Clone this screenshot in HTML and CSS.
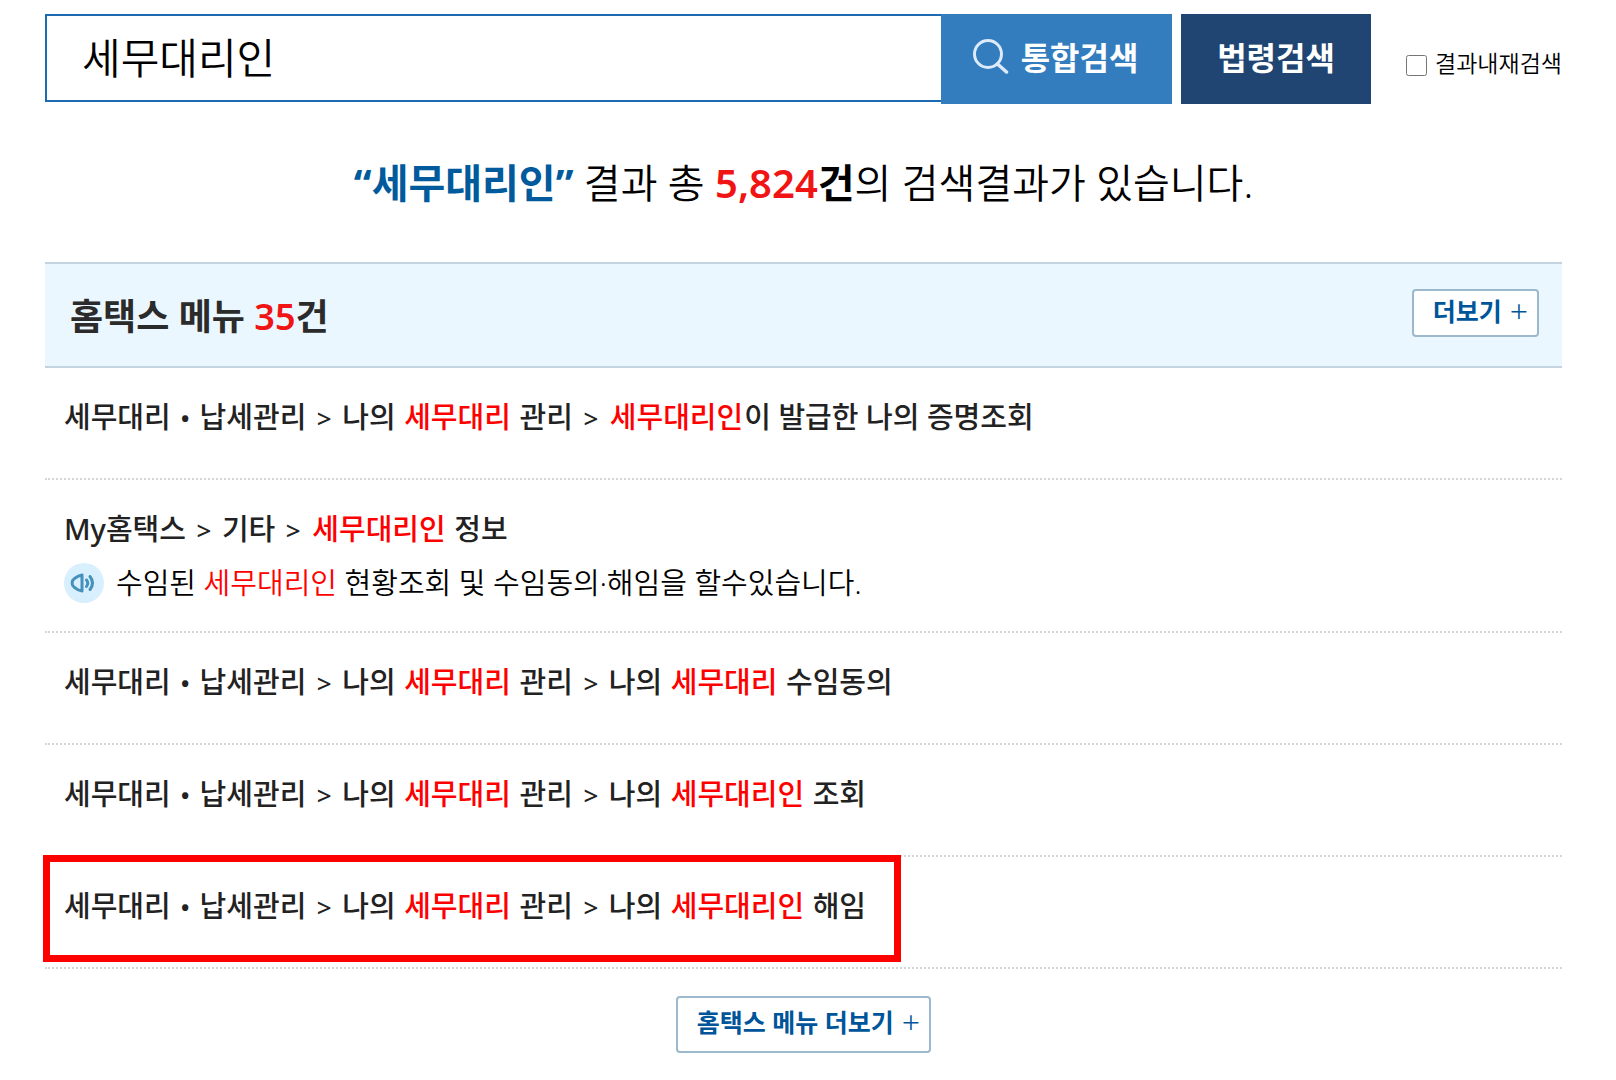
FILE: index.html
```html
<!DOCTYPE html>
<html lang="ko">
<head>
  <meta charset="UTF-8">
  <title>통합검색</title>
  <meta name="viewport" content="width=device-width, initial-scale=1">
  <link rel="stylesheet" href="styles.css">
</head>
<body>
  <div class="wrapper">
    <form class="search">
      <input class="search-input" type="text" value="세무대리인" aria-label="검색어">
      <button class="btn-search" type="submit">
        <svg width="36" height="36" viewBox="0 0 36 36" fill="none" stroke="#dceafa" stroke-width="3" stroke-linecap="round" aria-hidden="true">
          <circle cx="15" cy="16" r="13.500"/>
          <path d="M24.500 26L33.500 34" stroke-width="3.500"/>
        </svg>
        <span>통합검색</span>
      </button>
      <button class="btn-law" type="button">법령검색</button>
      <label class="again"><input type="checkbox"><span>결과내재검색</span></label>
    </form>

    <p class="summary"><strong class="keyword">“세무대리인”</strong> 결과 총 <strong><em>5,824</em>건</strong>의 검색결과가 있습니다.</p>

    <div class="group">
      <div class="group-head">
        <h2>홈택스 메뉴 <em>35</em>건</h2>
        <button class="btn-more" type="button">더보기 <span>+</span></button>
      </div>
      <ul class="list">
        <li><a href="#">세무대리 <i class="dot">•</i> 납세관리 <i>&gt;</i> 나의 <em>세무대리</em> 관리 <i>&gt;</i> <em>세무대리인</em>이 발급한 나의 증명조회</a></li>
        <li>
          <a href="#">My홈택스 <i>&gt;</i> 기타 <i>&gt;</i> <em>세무대리인</em> 정보</a>
          <p class="desc">
            <svg width="40" height="40" viewBox="0 0 40 40" fill="none" stroke="#4590bd" stroke-width="3" stroke-linecap="round" stroke-linejoin="round" aria-hidden="true">
              <circle cx="20" cy="20" r="20" fill="#d8effd" stroke="none"/>
              <path d="M18 12V28C14 27.500 12.500 26 10 24C7.500 22.500 7.500 17.500 10 16C12.500 14 14 12.500 18 12Z"/>
              <path d="M22.500 17Q25 20 22.500 23.500M26 13.500Q31 20 26 26.500"/>
            </svg>
            <span>수임된 <em>세무대리인</em> 현황조회 및 수임동의·해임을 할수있습니다.</span>
          </p>
        </li>
        <li><a href="#">세무대리 <i class="dot">•</i> 납세관리 <i>&gt;</i> 나의 <em>세무대리</em> 관리 <i>&gt;</i> 나의 <em>세무대리</em> 수임동의</a></li>
        <li><a href="#">세무대리 <i class="dot">•</i> 납세관리 <i>&gt;</i> 나의 <em>세무대리</em> 관리 <i>&gt;</i> 나의 <em>세무대리인</em> 조회</a></li>
        <li class="marked"><a href="#">세무대리 <i class="dot">•</i> 납세관리 <i>&gt;</i> 나의 <em>세무대리</em> 관리 <i>&gt;</i> 나의 <em>세무대리인</em> 해임</a></li>
      </ul>
      <button class="btn-more btn-all" type="button">홈택스 메뉴 더보기 <span>+</span></button>
    </div>
  </div>
</body>
</html>
```
FILE: styles.css
```css
*, *::before {
  box-sizing: border-box;
}
body, h2, p, ul {
  margin: 0;
  padding: 0;
}
body, button, input {
  font-family: "Noto Sans", "Noto Sans CJK KR", sans-serif;
}
body {
  background: #fff;
  color: #000;
}
em {
  font-style: normal;
  color: #f01414;
}
button {
  cursor: pointer;
}
.wrapper {
  padding: 14px 54px 24px 45px;
}

/* search bar */
.search {
  display: flex;
  align-items: flex-start;
}
.search-input {
  flex: 1;
  min-width: 0;
  height: 88px;
  padding: 0 35px 6px;
  border: 2px solid #1c6ab2;
  border-right: 0;
  font-size: 42px;
  font-weight: 350;
  outline: 0;
}
.btn-search, .btn-law {
  display: flex;
  align-items: center;
  justify-content: center;
  height: 90px;
  padding: 0 0 6px;
  border: 0;
  color: #fff;
  font-size: 32px;
  font-weight: 700;
}
.btn-search {
  gap: 12px;
  width: 231px;
  padding-right: 2px;
  background: #337dbe;
}
.btn-law {
  width: 190px;
  margin-left: 9px;
  background: #204573;
}
.again {
  display: flex;
  align-items: center;
  gap: 8px;
  margin-left: 35px;
  padding-top: 32px;
  font-size: 23px;
  font-weight: 350;
  line-height: 34px;
}
.again input {
  width: 21px;
  height: 21px;
  margin: 4px 0 0;
}

.summary {
  padding: 47px 0 48px;
  font-size: 40px;
  font-weight: 350;
  line-height: 63px;
  text-align: center;
}
.summary strong {
  font-weight: 700;
}
.summary strong em {
  font-weight: 600;
}
.summary .keyword {
  color: #005a9c;
}

/* result group */
.group {
  display: flex;
  flex-direction: column;
}
.group-head {
  display: flex;
  align-items: flex-start;
  justify-content: space-between;
  height: 106px;
  padding: 25px 23px 0 25px;
  background: #ebf7ff;
  border-top: 2px solid #c3d3df;
  border-bottom: 2px solid #c3d3df;
}
.group-head h2 {
  color: #2b2b2b;
  font-size: 36px;
  font-weight: 700;
  line-height: 56px;
}
.group-head h2 em {
  font-weight: 600;
}
.btn-more {
  display: flex;
  align-items: center;
  gap: 8px;
  height: 48px;
  padding: 0 9px 4px 19px;
  background: #fff;
  border: 2px solid #9bb8cc;
  border-radius: 4px;
  color: #00559a;
  font-size: 25px;
  font-weight: 700;
  line-height: 40px;
}
.btn-more span {
  font-size: 32px;
  font-weight: 300;
}
.btn-all {
  align-self: center;
  height: 57px;
  margin-top: 27px;
  padding-bottom: 6px;
}

.list {
  list-style: none;
}
.list li {
  padding: 28px 19px 40px;
  border-bottom: 2px dotted #d6d6d6;
}
.list a {
  color: #222;
  font-size: 29px;
  font-weight: 500;
  line-height: 42px;
  text-decoration: none;
  display: block;
}
.list i {
  margin: 0 3px;
  font-size: 26px;
  font-style: normal;
  line-height: 1;
}
.list .dot {
  margin: 0 2px;
}
.list em {
  color: #f00;
}
.list a em {
  margin: 0 1px;
}
.desc {
  display: flex;
  align-items: center;
  gap: 12px;
  margin: 12px 0 -13px;
  font-size: 29px;
  font-weight: 350;
  line-height: 42px;
}
.list .marked {
  position: relative;
}
.marked::before {
  content: '';
  position: absolute;
  top: -2px;
  left: -2px;
  width: 858px;
  height: 107px;
  border: 7px solid #f00;
  pointer-events: none;
}
```
